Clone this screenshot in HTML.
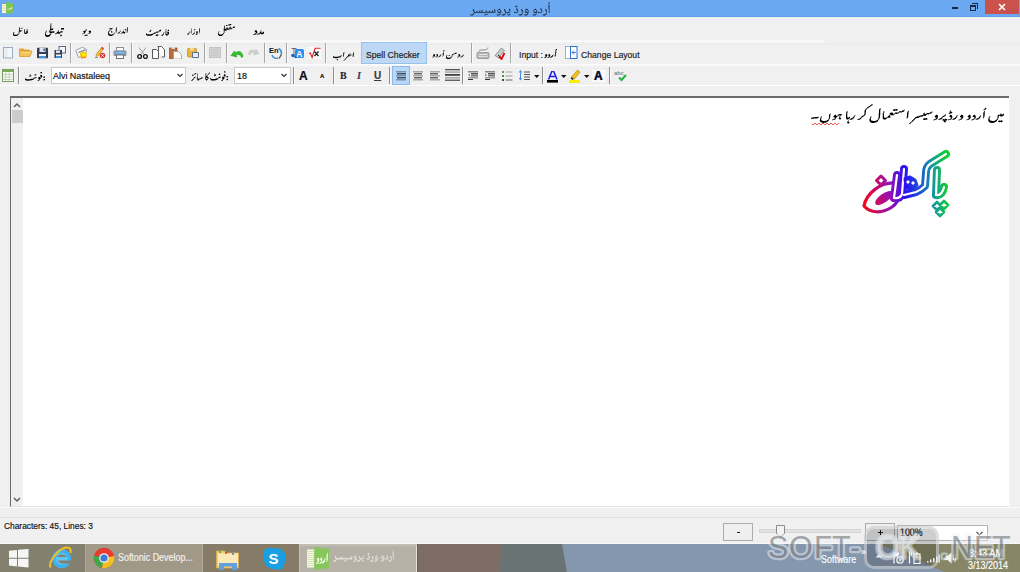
<!DOCTYPE html><html><head><meta charset="utf-8"><style>
*{margin:0;padding:0;box-sizing:border-box}
html,body{width:1020px;height:572px;overflow:hidden;background:#f0f0f0;font-family:"Liberation Sans",sans-serif}
.a{position:absolute}
.u{position:absolute;shape-rendering:crispEdges;overflow:visible}
.t{position:absolute;white-space:pre;font-family:"Liberation Sans",sans-serif;transform-origin:0 0;-webkit-text-stroke:0.18px currentColor}
.sep{position:absolute;width:1px;background:#a0a0a0}
</style></head><body><div class="a" style="left:0;top:0;width:1020px;height:17px;background:#6aa8f1"></div><div class="a" style="left:0;top:16px;width:1020px;height:1px;background:#63a0ea"></div><svg class="a" style="left:0;top:0" width="16" height="16"><rect x="2" y="4" width="4" height="9" fill="#f2f6e2"/><path d="M2.5 5.5h3M2.5 8h3M2.5 10.5h3" stroke="#d8c8a0" stroke-width="0.7"/><path d="M6 2L13 3.3V12.5L6 14z" fill="#80c452"/><path d="M7.5 9.5h1M9 9.5v-1.5M10.5 9.5v-1.5M11.5 9v-2" stroke="#e8f4dc" stroke-width="0.9"/></svg><svg class="u" style="left:470px;top:2px" width="80" height="14" ><path fill="#1e2a3a" fill-opacity="0.25" d="M78 0h1v1h-1zM78 2h1v1h-1zM45 3h2v1h-2zM45 5h2v1h-2zM29 6h1v1h-1zM39 6h1v1h-1zM47 6h1v1h-1zM56 6h1v1h-1zM65 6h1v1h-1zM71 6h1v1h-1zM2 7h1v1h-1zM12 7h1v1h-1zM30 7h1v1h-1zM35 7h1v1h-1zM40 7h1v1h-1zM52 7h1v1h-1zM66 7h1v1h-1zM76 7h1v1h-1zM78 7h1v1h-1zM4 8h1v1h-1zM7 8h1v1h-1zM9 8h3v1h-3zM19 8h1v1h-1zM25 8h1v1h-1zM28 8h1v1h-1zM40 8h1v1h-1zM64 8h1v1h-1zM72 8h1v1h-1zM78 8h1v1h-1zM10 9h1v1h-1zM18 9h1v1h-1zM20 9h2v1h-2zM23 9h1v1h-1zM28 9h2v1h-2zM31 9h1v1h-1zM34 9h1v1h-1zM38 9h1v1h-1zM40 9h1v1h-1zM44 9h1v1h-1zM48 9h1v1h-1zM51 9h1v1h-1zM54 9h1v1h-1zM56 9h2v1h-2zM64 9h2v1h-2zM67 9h2v1h-2zM72 9h1v1h-1zM78 9h1v1h-1zM3 10h1v1h-1zM25 10h1v1h-1zM27 10h1v1h-1zM31 10h1v1h-1zM63 10h1v1h-1zM67 10h1v1h-1zM78 10h1v1h-1zM4 11h1v1h-1zM17 11h1v1h-1zM29 11h1v1h-1zM34 11h1v1h-1zM37 11h1v1h-1zM39 11h1v1h-1zM51 11h1v1h-1zM58 11h1v1h-1zM65 11h1v1h-1zM75 11h1v1h-1zM26 12h1v1h-1zM30 12h2v1h-2zM35 12h1v1h-1zM40 12h1v1h-1zM48 12h1v1h-1zM52 12h1v1h-1zM62 12h1v1h-1zM66 12h1v1h-1zM72 12h1v1h-1zM76 12h1v1h-1zM0 13h1v1h-1zM14 13h2v1h-2zM29 13h1v1h-1zM34 13h1v1h-1zM39 13h1v1h-1zM51 13h1v1h-1zM54 13h1v1h-1zM65 13h1v1h-1zM75 13h1v1h-1z"/><path fill="#1e2a3a" fill-opacity="0.50" d="M79 0h1v1h-1zM78 1h2v1h-2zM78 3h1v1h-1zM45 4h1v1h-1zM47 4h1v1h-1zM78 4h2v1h-2zM78 5h2v1h-2zM46 6h1v1h-1zM70 6h1v1h-1zM78 6h2v1h-2zM55 7h1v1h-1zM70 7h1v1h-1zM79 7h1v1h-1zM12 8h1v1h-1zM16 8h1v1h-1zM22 8h1v1h-1zM27 8h1v1h-1zM35 8h1v1h-1zM51 8h1v1h-1zM55 8h1v1h-1zM57 8h2v1h-2zM63 8h1v1h-1zM75 8h1v1h-1zM79 8h1v1h-1zM3 9h2v1h-2zM6 9h2v1h-2zM12 9h1v1h-1zM15 9h1v1h-1zM24 9h2v1h-2zM27 9h1v1h-1zM39 9h1v1h-1zM58 9h1v1h-1zM63 9h1v1h-1zM71 9h1v1h-1zM79 9h1v1h-1zM16 10h1v1h-1zM39 10h1v1h-1zM47 10h1v1h-1zM52 10h1v1h-1zM55 10h1v1h-1zM58 10h1v1h-1zM71 10h1v1h-1zM76 10h1v1h-1zM79 10h1v1h-1zM30 11h1v1h-1zM35 11h1v1h-1zM52 11h1v1h-1zM57 11h1v1h-1zM66 11h1v1h-1zM0 12h2v1h-2zM3 12h1v1h-1zM14 12h2v1h-2zM17 12h1v1h-1zM27 12h2v1h-2zM32 12h1v1h-1zM37 12h2v1h-2zM49 12h1v1h-1zM54 12h2v1h-2zM63 12h2v1h-2zM73 12h1v1h-1zM1 13h2v1h-2zM27 13h2v1h-2zM32 13h2v1h-2zM38 13h1v1h-1zM49 13h2v1h-2zM55 13h2v1h-2zM63 13h2v1h-2zM73 13h2v1h-2z"/><path fill="#1e2a3a" fill-opacity="0.75" d="M79 3h1v1h-1zM46 4h1v1h-1zM3 7h1v1h-1zM24 7h1v1h-1zM28 7h1v1h-1zM34 7h1v1h-1zM46 7h2v1h-2zM51 7h1v1h-1zM57 7h1v1h-1zM64 7h1v1h-1zM71 7h1v1h-1zM75 7h1v1h-1zM24 8h1v1h-1zM30 8h1v1h-1zM34 8h1v1h-1zM39 8h1v1h-1zM47 8h1v1h-1zM52 8h1v1h-1zM66 8h1v1h-1zM71 8h1v1h-1zM76 8h1v1h-1zM9 9h1v1h-1zM11 9h1v1h-1zM16 9h1v1h-1zM19 9h1v1h-1zM22 9h1v1h-1zM30 9h1v1h-1zM35 9h1v1h-1zM47 9h1v1h-1zM52 9h1v1h-1zM55 9h1v1h-1zM66 9h1v1h-1zM76 9h1v1h-1zM5 10h11v1h-11zM17 10h8v1h-8zM29 10h2v1h-2zM35 10h4v1h-4zM44 10h3v1h-3zM57 10h1v1h-1zM65 10h2v1h-2zM68 10h3v1h-3zM3 11h1v1h-1zM76 11h1v1h-1zM2 12h1v1h-1zM16 12h1v1h-1zM29 12h1v1h-1zM33 12h2v1h-2zM39 12h1v1h-1zM50 12h2v1h-2zM56 12h2v1h-2zM65 12h1v1h-1zM74 12h2v1h-2z"/><path fill="#1e2a3a" fill-opacity="1.00" d="M29 7h1v1h-1zM39 7h1v1h-1zM56 7h1v1h-1zM65 7h1v1h-1zM3 8h1v1h-1zM4 10h1v1h-1zM28 10h1v1h-1zM56 10h1v1h-1zM64 10h1v1h-1z"/></svg><div class="a" style="left:952px;top:7px;width:6px;height:2px;background:#1b2a3b"></div><div class="a" style="left:970px;top:5px;width:6px;height:6px;border:1px solid #1b2a3b;border-top-width:2px"></div><div class="a" style="left:972px;top:3px;width:6px;height:6px;border-top:1px solid #1b2a3b;border-right:1px solid #1b2a3b"></div><div class="a" style="left:985px;top:0;width:34px;height:14px;background:#c9524c"></div><svg class="a" style="left:998px;top:3px" width="8" height="8"><path d="M1 1L7 7M7 1L1 7" stroke="#fff" stroke-width="1.6"/></svg><svg class="u" style="left:13px;top:27px" width="15" height="9" ><path fill="#000" fill-opacity="0.25" d="M9 0h1v1h-1zM7 1h1v1h-1zM9 1h1v1h-1zM13 2h1v1h-1zM9 3h1v1h-1zM13 3h1v1h-1zM5 4h1v1h-1zM8 4h1v1h-1zM1 5h1v1h-1zM5 5h1v1h-1zM6 6h1v1h-1zM14 6h1v1h-1zM2 7h2v1h-2z"/><path fill="#000" fill-opacity="0.50" d="M6 0h1v1h-1zM8 1h1v1h-1zM11 2h1v1h-1zM14 2h1v1h-1zM7 3h2v1h-2zM14 3h1v1h-1zM0 5h1v1h-1zM6 5h1v1h-1zM12 5h1v1h-1zM5 6h1v1h-1zM11 6h1v1h-1zM1 7h1v1h-1zM5 7h1v1h-1zM0 8h1v1h-1zM4 8h1v1h-1z"/><path fill="#000" fill-opacity="0.75" d="M6 1h1v1h-1zM6 2h1v1h-1zM11 3h1v1h-1zM6 4h2v1h-2zM11 4h1v1h-1zM13 4h2v1h-2zM11 5h1v1h-1zM13 5h2v1h-2zM0 6h1v1h-1zM13 6h1v1h-1zM4 7h1v1h-1z"/><path fill="#000" fill-opacity="1.00" d="M6 3h1v1h-1zM12 6h1v1h-1zM0 7h1v1h-1zM1 8h3v1h-3z"/></svg><svg class="u" style="left:45px;top:23px" width="19" height="14" ><path fill="#000" fill-opacity="0.25" d="M5 0h2v1h-2zM6 1h1v1h-1zM6 2h1v1h-1zM6 3h1v1h-1zM6 4h1v1h-1zM8 5h1v1h-1zM1 7h1v1h-1zM6 7h1v1h-1zM0 8h1v1h-1zM9 8h1v1h-1zM12 8h1v1h-1zM1 9h1v1h-1zM9 9h1v1h-1zM11 9h1v1h-1zM17 9h1v1h-1zM6 10h1v1h-1zM1 11h1v1h-1zM10 11h1v1h-1zM15 11h2v1h-2zM5 12h1v1h-1zM0 13h1v1h-1zM4 13h1v1h-1zM15 13h1v1h-1z"/><path fill="#000" fill-opacity="0.50" d="M5 1h1v1h-1zM5 2h1v1h-1zM6 5h2v1h-2zM17 6h2v1h-2zM4 7h2v1h-2zM13 7h1v1h-1zM1 8h1v1h-1zM6 8h1v1h-1zM15 8h1v1h-1zM17 8h1v1h-1zM0 9h1v1h-1zM4 9h1v1h-1zM16 9h1v1h-1zM5 10h1v1h-1zM10 10h1v1h-1zM12 10h1v1h-1zM4 11h1v1h-1z"/><path fill="#000" fill-opacity="0.75" d="M5 3h1v1h-1zM5 4h1v1h-1zM5 5h1v1h-1zM16 5h1v1h-1zM16 6h1v1h-1zM4 8h2v1h-2zM7 8h2v1h-2zM13 8h1v1h-1zM16 8h1v1h-1zM7 9h2v1h-2zM14 9h2v1h-2zM0 10h1v1h-1zM11 10h1v1h-1zM13 10h2v1h-2zM5 11h1v1h-1zM0 12h1v1h-1zM2 12h1v1h-1zM15 12h2v1h-2zM1 13h1v1h-1zM3 13h1v1h-1z"/><path fill="#000" fill-opacity="1.00" d="M17 5h2v1h-2zM5 6h3v1h-3zM5 9h2v1h-2zM12 9h2v1h-2zM0 11h1v1h-1zM1 12h1v1h-1zM3 12h2v1h-2zM2 13h1v1h-1z"/></svg><svg class="u" style="left:82px;top:29px" width="9" height="7" ><path fill="#000" fill-opacity="0.25" d="M3 0h1v1h-1zM2 1h1v1h-1zM7 1h2v1h-2zM6 2h1v1h-1zM1 3h1v1h-1zM3 3h1v1h-1zM0 4h1v1h-1zM8 4h1v1h-1zM0 5h1v1h-1zM3 5h3v1h-3z"/><path fill="#000" fill-opacity="0.50" d="M4 0h1v1h-1zM3 1h2v1h-2zM1 4h2v1h-2zM6 4h2v1h-2zM2 6h1v1h-1zM5 6h1v1h-1z"/><path fill="#000" fill-opacity="0.75" d="M1 2h1v1h-1zM3 2h1v1h-1zM7 3h2v1h-2zM3 6h2v1h-2z"/><path fill="#000" fill-opacity="1.00" d="M2 2h1v1h-1zM7 2h2v1h-2zM2 3h1v1h-1z"/></svg><svg class="u" style="left:108px;top:27px" width="20" height="9" ><path fill="#000" fill-opacity="0.25" d="M1 2h1v1h-1zM7 2h1v1h-1zM16 2h1v1h-1zM18 2h1v1h-1zM2 3h1v1h-1zM7 3h1v1h-1zM12 3h1v1h-1zM15 3h1v1h-1zM17 3h2v1h-2zM4 4h1v1h-1zM7 4h1v1h-1zM11 4h1v1h-1zM14 4h1v1h-1zM17 4h2v1h-2zM4 5h1v1h-1zM6 5h3v1h-3zM13 5h1v1h-1zM17 5h3v1h-3zM1 6h1v1h-1zM5 6h1v1h-1zM9 6h1v1h-1zM11 6h2v1h-2zM14 6h2v1h-2zM0 8h1v1h-1z"/><path fill="#000" fill-opacity="0.50" d="M8 0h1v1h-1zM19 0h1v1h-1zM1 1h1v1h-1zM4 1h1v1h-1zM2 2h2v1h-2zM1 3h1v1h-1zM0 4h2v1h-2zM8 4h1v1h-1zM12 4h1v1h-1zM19 4h1v1h-1zM3 5h1v1h-1zM10 5h1v1h-1zM6 6h1v1h-1zM10 6h1v1h-1zM13 6h1v1h-1zM16 6h1v1h-1zM2 7h2v1h-2zM4 8h1v1h-1z"/><path fill="#000" fill-opacity="0.75" d="M2 1h2v1h-2zM8 1h1v1h-1zM19 1h1v1h-1zM8 2h1v1h-1zM17 2h1v1h-1zM19 2h1v1h-1zM8 3h1v1h-1zM19 3h1v1h-1zM3 4h1v1h-1zM15 4h1v1h-1zM0 5h1v1h-1zM11 5h1v1h-1zM14 5h1v1h-1zM0 7h1v1h-1zM4 7h2v1h-2zM1 8h1v1h-1z"/><path fill="#000" fill-opacity="1.00" d="M15 5h2v1h-2zM0 6h1v1h-1zM1 7h1v1h-1zM2 8h2v1h-2z"/></svg><svg class="u" style="left:146px;top:29px" width="23" height="7" ><path fill="#000" fill-opacity="0.25" d="M4 0h1v1h-1zM14 0h1v1h-1zM19 0h2v1h-2zM22 0h1v1h-1zM5 1h1v1h-1zM19 1h3v1h-3zM10 2h1v1h-1zM14 2h1v1h-1zM20 2h3v1h-3zM12 3h1v1h-1zM17 3h2v1h-2zM20 3h1v1h-1zM6 4h1v1h-1zM7 5h1v1h-1zM12 5h1v1h-1zM0 6h1v1h-1zM9 6h1v1h-1zM12 6h1v1h-1z"/><path fill="#000" fill-opacity="0.50" d="M3 2h1v1h-1zM11 2h3v1h-3zM19 2h1v1h-1zM8 3h2v1h-2zM19 3h1v1h-1zM0 4h1v1h-1zM9 4h1v1h-1zM17 4h1v1h-1zM19 4h3v1h-3zM10 5h2v1h-2zM16 5h1v1h-1zM19 5h1v1h-1zM22 5h1v1h-1zM5 6h1v1h-1zM15 6h1v1h-1zM20 6h2v1h-2z"/><path fill="#000" fill-opacity="0.75" d="M4 1h1v1h-1zM13 1h1v1h-1zM4 2h1v1h-1zM10 3h2v1h-2zM21 3h1v1h-1zM7 4h2v1h-2zM1 5h4v1h-4zM17 5h1v1h-1zM21 5h1v1h-1zM1 6h4v1h-4zM11 6h1v1h-1zM16 6h1v1h-1z"/><path fill="#000" fill-opacity="1.00" d="M14 1h1v1h-1zM22 1h1v1h-1zM22 3h1v1h-1zM22 4h1v1h-1zM0 5h1v1h-1zM5 5h2v1h-2zM20 5h1v1h-1zM10 6h1v1h-1z"/></svg><svg class="u" style="left:187px;top:28px" width="13" height="7" ><path fill="#000" fill-opacity="0.25" d="M4 0h1v1h-1zM8 1h1v1h-1zM7 2h1v1h-1zM2 3h2v1h-2zM7 3h1v1h-1zM3 4h1v1h-1zM0 5h1v1h-1zM2 5h1v1h-1zM4 5h1v1h-1zM12 5h1v1h-1zM8 6h1v1h-1zM10 6h1v1h-1z"/><path fill="#000" fill-opacity="0.50" d="M12 0h1v1h-1zM4 1h1v1h-1zM4 2h1v1h-1zM4 3h1v1h-1zM9 3h2v1h-2zM2 4h1v1h-1zM4 4h1v1h-1zM7 4h1v1h-1zM12 4h1v1h-1zM7 5h1v1h-1zM9 5h2v1h-2zM0 6h2v1h-2zM5 6h2v1h-2z"/><path fill="#000" fill-opacity="0.75" d="M7 1h1v1h-1zM12 1h1v1h-1zM12 2h1v1h-1zM12 3h1v1h-1zM9 4h2v1h-2zM1 5h1v1h-1zM6 5h1v1h-1zM9 6h1v1h-1z"/></svg><svg class="u" style="left:218px;top:24px" width="17" height="12" ><path fill="#000" fill-opacity="0.25" d="M13 0h1v1h-1zM6 1h1v1h-1zM10 1h1v1h-1zM12 1h1v1h-1zM12 2h1v1h-1zM15 2h1v1h-1zM8 3h1v1h-1zM13 3h2v1h-2zM5 4h1v1h-1zM7 4h1v1h-1zM14 4h1v1h-1zM5 5h1v1h-1zM12 5h2v1h-2zM5 6h1v1h-1zM0 7h2v1h-2zM5 7h1v1h-1zM5 8h1v1h-1zM5 10h1v1h-1zM0 11h1v1h-1zM4 11h1v1h-1z"/><path fill="#000" fill-opacity="0.50" d="M10 0h1v1h-1zM9 1h1v1h-1zM11 1h1v1h-1zM16 2h1v1h-1zM9 3h1v1h-1zM11 3h1v1h-1zM10 4h1v1h-1zM11 5h1v1h-1zM8 6h1v1h-1zM6 7h1v1h-1zM0 8h1v1h-1zM6 8h1v1h-1zM2 10h2v1h-2z"/><path fill="#000" fill-opacity="0.75" d="M11 0h1v1h-1zM6 2h1v1h-1zM6 3h1v1h-1zM12 3h1v1h-1zM16 3h1v1h-1zM6 4h1v1h-1zM8 4h2v1h-2zM11 4h3v1h-3zM8 5h3v1h-3zM6 6h2v1h-2zM0 9h1v1h-1zM5 9h1v1h-1zM1 10h1v1h-1z"/><path fill="#000" fill-opacity="1.00" d="M12 0h1v1h-1zM8 1h1v1h-1zM15 3h1v1h-1zM6 5h2v1h-2zM0 10h1v1h-1zM4 10h1v1h-1zM1 11h3v1h-3z"/></svg><svg class="u" style="left:253px;top:30px" width="11" height="5" ><path fill="#000" fill-opacity="0.25" d="M7 0h2v1h-2zM1 1h1v1h-1zM4 1h1v1h-1zM8 1h1v1h-1zM10 1h1v1h-1zM2 2h1v1h-1zM4 2h1v1h-1zM6 2h1v1h-1zM1 3h1v1h-1zM4 3h1v1h-1zM3 4h1v1h-1zM6 4h1v1h-1zM8 4h2v1h-2z"/><path fill="#000" fill-opacity="0.50" d="M3 0h1v1h-1zM7 1h1v1h-1zM8 2h2v1h-2zM3 3h1v1h-1zM5 3h1v1h-1zM0 4h1v1h-1zM2 4h1v1h-1zM4 4h2v1h-2z"/><path fill="#000" fill-opacity="0.75" d="M2 0h1v1h-1zM2 3h1v1h-1zM6 3h2v1h-2zM10 3h1v1h-1zM1 4h1v1h-1z"/><path fill="#000" fill-opacity="1.00" d="M2 1h2v1h-2zM3 2h1v1h-1zM7 2h1v1h-1zM10 2h1v1h-1zM8 3h2v1h-2z"/></svg><div class="a" style="left:0;top:40px;width:825px;height:1px;background:#f4f7fa"></div><div class="a" style="left:0;top:41px;width:825px;height:1px;background:#fcfcfc"></div><div class="a" style="left:0;top:44px;width:1020px;height:1px;background:#ebebeb"></div><div class="a" style="left:0;top:64px;width:1020px;height:1px;background:#fafbfc"></div><div class="a" style="left:0;top:65px;width:1020px;height:1px;background:#f5f7f9"></div><div class="a" style="left:0;top:68px;width:1020px;height:1px;background:#ebebeb"></div><div class="a" style="left:0;top:85px;width:1020px;height:1px;background:#fff"></div><svg class="a" style="left:3px;top:47px" width="11" height="12" viewBox="0 0 11 12"><rect x="0.5" y="0.5" width="9" height="10.5" fill="#f3f6fb" stroke="#9eabc0"/><rect x="1.5" y="1.5" width="3" height="8.5" fill="#e3e9f2"/></svg><svg class="a" style="left:19px;top:47px" width="14" height="11" viewBox="0 0 14 11"><path d="M0.5 1.5h4l1 1h5v2h-9z" fill="#e3a834"/><path d="M0.5 2v7.5h10.5l2-5.5h-10z" fill="#f2c35a" stroke="#d59a26" stroke-width="0.8"/><path d="M3 5.5h8.5" stroke="#fbe3a0" stroke-width="0.8"/></svg><svg class="a" style="left:37px;top:47px" width="12" height="12" viewBox="0 0 12 12"><rect x="0" y="0.8" width="11" height="10.4" rx="0.8" fill="#2f3e56"/><rect x="2.5" y="1" width="6" height="4" fill="#dfe4ec"/><rect x="6.5" y="1.5" width="1.2" height="2.5" fill="#2f3e56"/><rect x="2" y="7" width="7" height="2" fill="#f4f6f9"/><rect x="2" y="9" width="7" height="2" fill="#4a90d8"/></svg><svg class="a" style="left:54px;top:46px" width="12" height="13" viewBox="0 0 12 13"><rect x="5" y="0.5" width="6.5" height="6.5" fill="#f4f6fa" stroke="#5b6a82" stroke-width="1"/><rect x="0.5" y="4" width="7.5" height="8" fill="#34445e"/><rect x="2" y="4.5" width="4" height="2.5" fill="#dfe4ec"/><rect x="2" y="8.5" width="5" height="1.5" fill="#f2f4f8"/><rect x="2" y="10" width="5" height="2" fill="#4a90d8"/></svg><div class="a" style="left:70px;top:43px;width:1px;height:20px;background:#a4a4a4"></div><div class="a" style="left:71px;top:43px;width:1px;height:20px;background:#fafafa"></div><svg class="a" style="left:75px;top:46px" width="13" height="13" viewBox="0 0 13 13"><path d="M0.6 4.4L7.6 1.2L11.8 3.7L10 9L3.7 11.6z" fill="#fafafa" stroke="#9aa0aa" stroke-width="1"/><path d="M3.5 6.5L10.5 3.8" stroke="#8a9ab8" stroke-width="1.6"/><circle cx="8.5" cy="9" r="3.4" fill="#f4c800"/><circle cx="8.8" cy="8.5" r="1.6" fill="#fff200"/><path d="M6.5 12.3l1.2-0.8M9.5 12l0.8-1" stroke="#d83020" stroke-width="1"/></svg><svg class="a" style="left:94px;top:46px" width="12" height="13" viewBox="0 0 12 13"><path d="M7.5 1.5l2 1.5-5 6.5-2.5 1 .5-2.5z" fill="#f0c040" stroke="#c88a20" stroke-width="0.7"/><path d="M7.5 1.5l2 1.5" stroke="#d84040" stroke-width="1.6"/><circle cx="8.5" cy="9.5" r="2.8" fill="#d83a3a"/><path d="M7.3 8.3l2.4 2.4M9.7 8.3l-2.4 2.4" stroke="#fff" stroke-width="0.9"/><path d="M1 11.5h3" stroke="#8b8b8b" stroke-width="1"/></svg><div class="a" style="left:109px;top:43px;width:1px;height:20px;background:#a4a4a4"></div><div class="a" style="left:110px;top:43px;width:1px;height:20px;background:#fafafa"></div><svg class="a" style="left:113px;top:47px" width="14" height="12" viewBox="0 0 14 12"><rect x="3.5" y="0.5" width="7" height="3.5" fill="#fff" stroke="#7e8590" stroke-width="0.9"/><rect x="0.5" y="3.5" width="13" height="5.5" rx="1" fill="#8d939d"/><rect x="2.5" y="4.5" width="9" height="3" fill="#76b2e6"/><rect x="3.5" y="8" width="7" height="3.5" fill="#fff" stroke="#5d636d" stroke-width="0.9"/></svg><div class="a" style="left:131px;top:43px;width:1px;height:20px;background:#a4a4a4"></div><div class="a" style="left:132px;top:43px;width:1px;height:20px;background:#fafafa"></div><svg class="a" style="left:137px;top:47px" width="11" height="12" viewBox="0 0 11 12"><path d="M2 0.5l5.5 7.5M9 0.5l-5.5 7.5" stroke="#9aa0a8" stroke-width="1"/><circle cx="2.6" cy="9.5" r="1.9" fill="none" stroke="#1d1d1d" stroke-width="1.4"/><circle cx="8.4" cy="9.5" r="1.9" fill="none" stroke="#1d1d1d" stroke-width="1.4"/></svg><svg class="a" style="left:152px;top:46px" width="14" height="13" viewBox="0 0 14 13"><path d="M0.5 3.5h4l2 2v7h-6z" fill="#fff" stroke="#5a5a5a" stroke-width="1"/><path d="M5.5 0.5h4l3 3v7.5h-3" fill="#fff" stroke="#5a5a5a" stroke-width="1"/><path d="M6.5 1v4.5" stroke="#5a5a5a" stroke-width="1"/></svg><svg class="a" style="left:169px;top:47px" width="14" height="12" viewBox="0 0 14 12"><rect x="0.5" y="1" width="7.5" height="10.5" fill="#b86c3a" stroke="#8a4c26" stroke-width="0.7"/><rect x="2.5" y="0" width="3.5" height="2" fill="#d8d8d8"/><path d="M4.5 4.5h5l3 3v4.5h-8z" fill="#fbfbfb" stroke="#9a9a9a" stroke-width="0.8"/></svg><svg class="a" style="left:187px;top:47px" width="13" height="11" viewBox="0 0 13 11"><rect x="0.5" y="1.5" width="9" height="8.5" rx="1" fill="#eab43c" stroke="#c08a20" stroke-width="0.7"/><rect x="3" y="0.5" width="4" height="3" fill="#f6dc90"/><path d="M5.5 5.5h6v5h-6z" fill="#e8eef8" stroke="#5b6f8e" stroke-width="1"/></svg><div class="a" style="left:204px;top:43px;width:1px;height:20px;background:#a4a4a4"></div><div class="a" style="left:205px;top:43px;width:1px;height:20px;background:#fafafa"></div><svg class="a" style="left:209px;top:47px" width="12" height="11" viewBox="0 0 12 11"><rect x="0.5" y="0.5" width="11" height="10" fill="#d4d4d4" stroke="#c4c4c4"/><path d="M2 3h8M2 5.5h8M2 8h8" stroke="#c0c0c0" stroke-width="0.8"/></svg><div class="a" style="left:226px;top:43px;width:1px;height:20px;background:#a4a4a4"></div><div class="a" style="left:227px;top:43px;width:1px;height:20px;background:#fafafa"></div><svg class="a" style="left:230px;top:48px" width="14" height="10" viewBox="0 0 14 10"><path d="M1 7.5l3.5-4.5 1 2c3-2.5 6.5-2 7.5 3.5l-1.5 1c-1-3-3.5-3.5-5.5-2.5l1 2z" fill="#2ec02e" stroke="#1a9a1a" stroke-width="0.6"/></svg><svg class="a" style="left:248px;top:47px" width="12" height="10" viewBox="0 0 12 10"><path d="M11 6.5l-3-4.5-1 2c-3-2-6-1-6.5 3.5l1.5.5c.5-2.5 2.5-3 4.5-2l-1 2z" fill="#cdcdcd" stroke="#c0c0c0" stroke-width="0.5"/></svg><div class="a" style="left:264px;top:43px;width:1px;height:20px;background:#a4a4a4"></div><div class="a" style="left:265px;top:43px;width:1px;height:20px;background:#fafafa"></div><svg class="a" style="left:269px;top:46px" width="14" height="13" viewBox="0 0 14 13"><text x="0" y="6.5" font-family="Liberation Sans" font-weight="bold" font-size="7.5" fill="#111">En</text><path d="M9.5 2.5a5 5 0 0 1 2.5 6" stroke="#4a90d8" stroke-width="1.6" fill="none"/><path d="M3 9a4.5 4.5 0 0 0 6 3" stroke="#4a90d8" stroke-width="1.6" fill="none"/><path d="M10 12.5l2.5-4" stroke="#5a5040" stroke-width="1.4"/></svg><div class="a" style="left:286px;top:43px;width:1px;height:20px;background:#a4a4a4"></div><div class="a" style="left:287px;top:43px;width:1px;height:20px;background:#fafafa"></div><svg class="a" style="left:291px;top:47px" width="13" height="11" viewBox="0 0 13 11"><rect x="4" y="2" width="9" height="9" rx="1.5" fill="#2e8ff0"/><text x="5.3" y="9.7" font-family="Liberation Sans" font-weight="bold" font-size="8.5" fill="#fff">A</text><path d="M0.5 1.5h5M3 1.5v6" stroke="#5a6a7a" stroke-width="1"/><circle cx="2" cy="8.5" r="1.8" fill="#1e5fb8"/><circle cx="4.5" cy="10" r="1.2" fill="#1e5fb8"/></svg><svg class="a" style="left:308px;top:47px" width="13" height="12" viewBox="0 0 13 12"><rect x="0" y="0" width="13" height="12" fill="#fafafa"/><path d="M0.8 6.5l1.5-.5 1.8 4.5 3-9.2h5.5" stroke="#e02020" stroke-width="1.1" fill="none"/><path d="M6.5 4.5l4 4.5M10.5 4.5l-4 4.5" stroke="#222" stroke-width="1.3"/></svg><div class="a" style="left:325px;top:43px;width:1px;height:20px;background:#a4a4a4"></div><div class="a" style="left:326px;top:43px;width:1px;height:20px;background:#fafafa"></div><div class="a" style="left:361px;top:42px;width:66px;height:22px;background:#bcd8f5;border:1px solid #99c2ea"></div><div class="t" style="left:366px;top:49px;font-size:9.6px;color:#1b1b1b;transform:scaleX(.9)">Spell Checker</div><div class="a" style="left:471px;top:43px;width:1px;height:20px;background:#a4a4a4"></div><div class="a" style="left:472px;top:43px;width:1px;height:20px;background:#fafafa"></div><svg class="a" style="left:476px;top:47px" width="14" height="12" viewBox="0 0 14 12"><path d="M3 4.5c0-1.5 1-1.5 4-1.5s5-0.5 5-2.5" stroke="#8a8a8a" stroke-width="1" fill="none"/><rect x="1" y="5.5" width="12" height="6" rx="1" fill="#b8b8b8" stroke="#8e8e8e" stroke-width="0.8"/><path d="M2.5 7.5h9M2.5 9.5h9" stroke="#e4e4e4" stroke-width="0.9"/></svg><svg class="a" style="left:494px;top:47px" width="12" height="13" viewBox="0 0 12 13"><path d="M1 8.5l6.5-7.5 3 2.5-6 7.5z" fill="#c8ccc8" stroke="#7c807c" stroke-width="0.8"/><path d="M4 8l3 2.5" stroke="#222" stroke-width="1"/><path d="M5 9.5l2.5 2.5 3-6" stroke="#e00000" stroke-width="1.8" fill="none"/></svg><div class="a" style="left:510px;top:43px;width:1px;height:20px;background:#a4a4a4"></div><div class="a" style="left:511px;top:43px;width:1px;height:20px;background:#fafafa"></div><div class="t" style="left:519px;top:49px;font-size:9.6px;color:#1b1b1b;transform:scaleX(.9)">Input :</div><svg class="a" style="left:565px;top:46px" width="13" height="13" viewBox="0 0 13 13"><rect x="0.5" y="0.5" width="5" height="12" fill="#fff" stroke="#8aa0b8" stroke-width="0.8"/><rect x="5.5" y="0.5" width="6.5" height="12" fill="#fff" stroke="#2f6fd0" stroke-width="1"/><path d="M7 6.5h4M7 6.5l2-2M7 6.5l2 2" stroke="#2f6fd0" stroke-width="0.9" fill="none"/></svg><div class="t" style="left:581px;top:49px;font-size:9.6px;color:#1b1b1b;transform:scaleX(.9)">Change Layout</div><svg class="a" style="left:1px;top:69px" width="14" height="13" viewBox="0 0 14 13"><rect x="1.5" y="0.5" width="11" height="12" fill="#fafcf8" stroke="#79a060" stroke-width="1"/><rect x="1.5" y="0.5" width="11" height="2.5" fill="#7aa85a"/><path d="M2 5.5h10M2 8h10M2 10.5h10M4.8 3v9M8.2 3v9" stroke="#b8ccb0" stroke-width="0.8"/></svg><div class="a" style="left:18px;top:67px;width:1px;height:17px;background:#8c8c8c"></div><div class="a" style="left:19px;top:67px;width:1px;height:17px;background:#fafafa"></div><div class="a" style="left:51px;top:67px;width:135px;height:17px;background:#fff;border:1px solid #c9c9c9"></div><div class="t" style="left:53px;top:70px;font-size:9.6px;color:#111;transform:scaleX(.93)">Alvi Nastaleeq</div><svg class="a" style="left:177px;top:73px" width="6" height="5" viewBox="0 0 6 5"><path d="M0.5 1l2.5 2.5 2.5-2.5" stroke="#333" stroke-width="1.2" fill="none"/></svg><div class="a" style="left:234px;top:67px;width:57px;height:17px;background:#fff;border:1px solid #c9c9c9"></div><div class="t" style="left:237px;top:70px;font-size:9.6px;color:#111;transform:scaleX(.93)">18</div><svg class="a" style="left:281px;top:73px" width="6" height="5" viewBox="0 0 6 5"><path d="M0.5 1l2.5 2.5 2.5-2.5" stroke="#333" stroke-width="1.2" fill="none"/></svg><div class="a" style="left:293px;top:67px;width:1px;height:17px;background:#8c8c8c"></div><div class="a" style="left:294px;top:67px;width:1px;height:17px;background:#fafafa"></div><div class="t" style="left:299px;top:69px;font-size:12px;font-weight:bold;color:#0c0c0c">A</div><div class="t" style="left:320px;top:73px;font-size:6px;font-weight:bold;color:#111">A</div><div class="a" style="left:333px;top:67px;width:1px;height:17px;background:#8c8c8c"></div><div class="a" style="left:334px;top:67px;width:1px;height:17px;background:#fafafa"></div><div class="t" style="left:340px;top:70px;font-size:10px;font-weight:bold;color:#2a2a2a;font-family:'Liberation Serif'">B</div><div class="t" style="left:357px;top:70px;font-size:10px;font-weight:bold;font-style:italic;color:#2c3e5c;font-family:'Liberation Serif'">I</div><div class="t" style="left:374px;top:70px;font-size:10px;font-weight:bold;color:#3a3a3a;text-decoration:underline;font-family:'Liberation Sans'">U</div><div class="a" style="left:389px;top:67px;width:1px;height:17px;background:#8c8c8c"></div><div class="a" style="left:390px;top:67px;width:1px;height:17px;background:#fafafa"></div><div class="a" style="left:392px;top:66px;width:18px;height:19px;background:#b9d7f6;border:1px solid #8cb9ea"></div><svg class="a" style="left:396px;top:71px" width="10" height="10" viewBox="0 0 10 10"><rect x="0" y="0" width="10" height="1.5" fill="#7890a8"/><rect x="1" y="2" width="9" height="1.5" fill="#40506a"/><rect x="0" y="4" width="10" height="1.5" fill="#7890a8"/><rect x="1" y="6" width="9" height="1.5" fill="#40506a"/><rect x="0" y="8" width="10" height="1.5" fill="#7890a8"/></svg><svg class="a" style="left:413px;top:71px" width="10" height="10" viewBox="0 0 10 10"><rect x="0" y="0" width="10" height="1.5" fill="#a8a8a8"/><rect x="1" y="2" width="8" height="1.5" fill="#666"/><rect x="0" y="4" width="10" height="1.5" fill="#a8a8a8"/><rect x="1" y="6" width="8" height="1.5" fill="#666"/><rect x="0" y="8" width="10" height="1.5" fill="#a8a8a8"/></svg><svg class="a" style="left:430px;top:71px" width="10" height="10" viewBox="0 0 10 10"><rect x="0" y="0" width="10" height="1.5" fill="#a8a8a8"/><rect x="0" y="2" width="8" height="1.5" fill="#666"/><rect x="0" y="4" width="10" height="1.5" fill="#a8a8a8"/><rect x="0" y="6" width="8" height="1.5" fill="#666"/><rect x="0" y="8" width="10" height="1.5" fill="#a8a8a8"/></svg><svg class="a" style="left:445px;top:69px" width="15" height="12" viewBox="0 0 15 12"><rect x="0" y="0" width="15" height="1.3" fill="#555"/><rect x="0" y="2.3" width="15" height="1.6" fill="#aaa"/><rect x="0" y="5" width="15" height="1.8" fill="#444"/><rect x="0" y="8" width="15" height="1.6" fill="#aaa"/><rect x="0" y="10.6" width="15" height="1.3" fill="#555"/></svg><div class="a" style="left:462px;top:67px;width:1px;height:17px;background:#8c8c8c"></div><div class="a" style="left:463px;top:67px;width:1px;height:17px;background:#fafafa"></div><svg class="a" style="left:468px;top:71px" width="11" height="9" viewBox="0 0 11 9"><rect x="0" y="0" width="10" height="1.5" fill="#888"/><rect x="3" y="2" width="7" height="1.5" fill="#555"/><rect x="3" y="4" width="7" height="1.5" fill="#777"/><rect x="0" y="6" width="10" height="1.5" fill="#999"/><rect x="0" y="8" width="5" height="1" fill="#333"/><path d="M2 2.5l-2 1.5 2 1.5z" fill="#4a9ae0"/></svg><svg class="a" style="left:485px;top:71px" width="11" height="9" viewBox="0 0 11 9"><rect x="0" y="0" width="10" height="1.5" fill="#888"/><rect x="3" y="2" width="7" height="1.5" fill="#555"/><rect x="3" y="4" width="7" height="1.5" fill="#777"/><rect x="0" y="6" width="10" height="1.5" fill="#999"/><rect x="0" y="8" width="5" height="1" fill="#333"/><path d="M0 2.5l2 1.5-2 1.5z" fill="#4a9ae0"/></svg><svg class="a" style="left:502px;top:71px" width="11" height="10" viewBox="0 0 11 10"><rect x="0" y="0" width="2" height="2" fill="#6a9a3a"/><rect x="0" y="4" width="2" height="2" fill="#5a8a2a"/><rect x="0" y="8" width="2" height="2" fill="#3a5a1a"/><rect x="3.5" y="0.5" width="7" height="1" fill="#aaa"/><rect x="3.5" y="4.5" width="7" height="1" fill="#999"/><rect x="3.5" y="8.5" width="7" height="1" fill="#666"/></svg><svg class="a" style="left:519px;top:70px" width="11" height="11" viewBox="0 0 11 11"><path d="M1.5 0l1.8 2.5h-3.6zM1.5 10.5l1.8-2.5h-3.6z" fill="#4a8ad8"/><rect x="1" y="2.5" width="1" height="5.5" fill="#4a8ad8"/><rect x="5" y="1.5" width="6" height="1" fill="#555"/><rect x="5" y="4" width="6" height="1" fill="#555"/><rect x="5" y="6.5" width="6" height="1" fill="#555"/><rect x="5" y="9" width="6" height="1" fill="#555"/></svg><svg class="a" style="left:534px;top:75px" width="6" height="3" viewBox="0 0 6 3"><path d="M0 0h5.5l-2.75 3z" fill="#111"/></svg><div class="a" style="left:542px;top:67px;width:1px;height:17px;background:#8c8c8c"></div><div class="a" style="left:543px;top:67px;width:1px;height:17px;background:#fafafa"></div><svg class="a" style="left:547px;top:71px" width="12" height="12" viewBox="0 0 12 12"><path d="M1.5 8.5l3.5-8.5h1.5l3.5 8.5M3.3 5.5h4.5" stroke="#1a1aee" stroke-width="1.5" fill="none"/><rect x="0" y="9" width="11" height="2.6" fill="#000"/></svg><svg class="a" style="left:561px;top:75px" width="6" height="3" viewBox="0 0 6 3"><path d="M0 0h5.5l-2.75 3z" fill="#111"/></svg><svg class="a" style="left:569px;top:69px" width="12" height="14" viewBox="0 0 12 14"><path d="M2.5 8l6-7 2.5 2-5.5 7z" fill="#f4c020" stroke="#b88a10" stroke-width="0.7"/><path d="M1.5 9.5l1-1.5 2.5 2-1.5 1z" fill="#333"/><rect x="0" y="11" width="11" height="3" fill="#f8f000"/></svg><svg class="a" style="left:584px;top:75px" width="6" height="3" viewBox="0 0 6 3"><path d="M0 0h5.5l-2.75 3z" fill="#111"/></svg><div class="a" style="left:592px;top:70px;width:13px;height:12px;background:#fbfbfb"></div><div class="t" style="left:594px;top:69px;font-size:12px;font-weight:bold;color:#0b0b20;text-shadow:0 0 1px #4a4af0">A</div><div class="a" style="left:609px;top:67px;width:1px;height:17px;background:#8c8c8c"></div><div class="a" style="left:610px;top:67px;width:1px;height:17px;background:#fafafa"></div><svg class="a" style="left:614px;top:69px" width="13" height="13" viewBox="0 0 13 13"><text x="0" y="6" font-family="Liberation Sans" font-size="6" fill="#666">abc</text><path d="M5 8.5l2.5 2.5 4.5-5" stroke="#28b040" stroke-width="2" fill="none"/></svg><svg class="u" style="left:333px;top:52px" width="21" height="9" ><path fill="#000" fill-opacity="0.25" d="M10 0h2v1h-2zM11 1h1v1h-1zM16 1h2v1h-2zM18 2h2v1h-2zM7 3h1v1h-1zM18 3h2v1h-2zM1 4h4v1h-4zM8 4h1v1h-1zM16 4h1v1h-1zM19 4h1v1h-1zM7 5h1v1h-1zM14 5h1v1h-1zM2 6h2v1h-2zM13 6h1v1h-1zM3 7h1v1h-1zM4 8h1v1h-1zM10 8h2v1h-2z"/><path fill="#000" fill-opacity="0.50" d="M20 0h1v1h-1zM15 2h3v1h-3zM8 3h1v1h-1zM17 3h1v1h-1zM5 4h1v1h-1zM10 4h1v1h-1zM15 4h1v1h-1zM20 4h1v1h-1zM6 5h1v1h-1zM12 6h1v1h-1zM11 7h2v1h-2z"/><path fill="#000" fill-opacity="0.75" d="M10 1h1v1h-1zM20 1h1v1h-1zM10 2h1v1h-1zM20 2h1v1h-1zM10 3h1v1h-1zM16 3h1v1h-1zM20 3h1v1h-1zM0 4h1v1h-1zM6 4h2v1h-2zM14 4h1v1h-1zM0 5h1v1h-1zM5 5h1v1h-1zM13 5h1v1h-1zM4 7h1v1h-1z"/><path fill="#000" fill-opacity="1.00" d="M15 3h1v1h-1zM1 5h4v1h-4z"/></svg><svg class="u" style="left:432px;top:50px" width="32" height="9" ><path fill="#000" fill-opacity="0.25" d="M23 2h2v1h-2zM10 3h1v1h-1zM21 3h1v1h-1zM8 4h3v1h-3zM22 4h1v1h-1zM31 4h1v1h-1zM4 5h1v1h-1zM7 5h1v1h-1zM10 5h1v1h-1zM15 5h2v1h-2zM19 5h1v1h-1zM28 5h1v1h-1zM0 6h1v1h-1zM3 6h1v1h-1zM6 6h1v1h-1zM8 6h1v1h-1zM10 6h1v1h-1zM20 6h1v1h-1zM25 6h1v1h-1zM28 6h1v1h-1zM0 7h2v1h-2zM3 7h2v1h-2zM6 7h1v1h-1zM16 7h2v1h-2zM25 7h2v1h-2zM28 7h2v1h-2z"/><path fill="#000" fill-opacity="0.50" d="M11 0h2v1h-2zM11 1h1v1h-1zM11 2h1v1h-1zM22 3h1v1h-1zM24 3h1v1h-1zM1 4h1v1h-1zM4 4h1v1h-1zM21 4h1v1h-1zM26 4h1v1h-1zM11 5h1v1h-1zM14 5h1v1h-1zM20 5h1v1h-1zM26 5h1v1h-1zM30 5h2v1h-2zM1 6h2v1h-2zM4 6h2v1h-2zM19 6h1v1h-1zM26 6h2v1h-2zM29 6h1v1h-1zM15 7h1v1h-1zM19 7h1v1h-1zM14 8h1v1h-1zM18 8h1v1h-1z"/><path fill="#000" fill-opacity="0.75" d="M11 3h1v1h-1zM2 4h1v1h-1zM5 4h1v1h-1zM11 4h1v1h-1zM20 4h1v1h-1zM27 4h1v1h-1zM1 5h1v1h-1zM8 5h1v1h-1zM17 5h1v1h-1zM7 6h1v1h-1zM14 6h1v1h-1zM30 6h1v1h-1zM18 7h1v1h-1z"/><path fill="#000" fill-opacity="1.00" d="M23 3h1v1h-1zM2 5h1v1h-1zM5 5h1v1h-1zM27 5h1v1h-1zM14 7h1v1h-1zM15 8h3v1h-3z"/></svg><svg class="u" style="left:544px;top:49px" width="13" height="9" ><path fill="#000" fill-opacity="0.25" d="M11 0h1v1h-1zM12 1h1v1h-1zM12 2h1v1h-1zM12 3h1v1h-1zM9 5h1v1h-1zM3 6h1v1h-1zM6 6h1v1h-1zM9 6h2v1h-2zM4 7h1v1h-1zM6 7h1v1h-1zM10 7h2v1h-2zM2 8h2v1h-2zM5 8h1v1h-1z"/><path fill="#000" fill-opacity="0.50" d="M11 1h1v1h-1zM11 2h1v1h-1zM1 5h1v1h-1zM4 5h1v1h-1zM4 6h1v1h-1zM1 7h1v1h-1zM0 8h1v1h-1zM6 8h2v1h-2z"/><path fill="#000" fill-opacity="0.75" d="M11 3h1v1h-1zM11 4h1v1h-1zM2 5h1v1h-1zM5 5h1v1h-1zM11 5h1v1h-1zM1 6h1v1h-1zM8 6h1v1h-1zM11 6h1v1h-1zM2 7h1v1h-1zM5 7h1v1h-1zM7 7h2v1h-2zM1 8h1v1h-1zM4 8h1v1h-1z"/><path fill="#000" fill-opacity="1.00" d="M12 0h1v1h-1zM2 6h1v1h-1zM5 6h1v1h-1z"/></svg><svg class="u" style="left:25px;top:72px" width="20" height="9" ><path fill="#000" fill-opacity="0.25" d="M15 1h2v1h-2zM4 2h2v1h-2zM9 2h1v1h-1zM11 2h1v1h-1zM4 3h1v1h-1zM6 3h1v1h-1zM9 3h1v1h-1zM17 4h2v1h-2zM6 6h2v1h-2zM10 6h1v1h-1zM13 7h1v1h-1zM0 8h1v1h-1zM6 8h1v1h-1zM12 8h1v1h-1zM14 8h1v1h-1zM18 8h2v1h-2z"/><path fill="#000" fill-opacity="0.50" d="M15 0h1v1h-1zM10 3h1v1h-1zM4 4h2v1h-2zM15 4h1v1h-1zM19 4h1v1h-1zM9 5h1v1h-1zM11 5h1v1h-1zM13 5h1v1h-1zM15 5h2v1h-2zM18 5h1v1h-1zM0 6h1v1h-1zM9 6h1v1h-1zM8 7h1v1h-1zM18 7h1v1h-1zM1 8h1v1h-1zM4 8h2v1h-2z"/><path fill="#000" fill-opacity="0.75" d="M10 2h1v1h-1zM5 3h1v1h-1zM15 3h1v1h-1zM10 5h1v1h-1zM19 5h1v1h-1zM8 6h1v1h-1zM13 6h1v1h-1zM15 6h1v1h-1zM2 7h3v1h-3zM14 7h1v1h-1zM2 8h2v1h-2zM13 8h1v1h-1z"/><path fill="#000" fill-opacity="1.00" d="M16 0h1v1h-1zM16 3h1v1h-1zM16 4h1v1h-1zM14 5h1v1h-1zM14 6h1v1h-1zM0 7h2v1h-2zM5 7h3v1h-3zM19 7h1v1h-1z"/></svg><svg class="u" style="left:191px;top:71px" width="37" height="10" ><path fill="#000" fill-opacity="0.25" d="M34 0h1v1h-1zM34 1h1v1h-1zM3 2h1v1h-1zM5 2h2v1h-2zM14 2h2v1h-2zM23 2h1v1h-1zM1 3h2v1h-2zM4 3h1v1h-1zM15 3h2v1h-2zM27 3h1v1h-1zM29 3h1v1h-1zM34 3h1v1h-1zM15 4h1v1h-1zM32 4h1v1h-1zM4 5h1v1h-1zM23 5h1v1h-1zM28 5h2v1h-2zM31 5h2v1h-2zM34 5h1v1h-1zM2 6h1v1h-1zM4 6h1v1h-1zM35 6h2v1h-2zM3 7h1v1h-1zM5 7h1v1h-1zM7 7h1v1h-1zM11 7h1v1h-1zM15 7h1v1h-1zM20 7h1v1h-1zM24 7h1v1h-1zM33 7h1v1h-1zM36 7h1v1h-1zM9 8h1v1h-1zM6 9h1v1h-1zM24 9h1v1h-1zM36 9h1v1h-1z"/><path fill="#000" fill-opacity="0.50" d="M18 1h1v1h-1zM33 1h1v1h-1zM17 2h2v1h-2zM28 2h1v1h-1zM3 3h1v1h-1zM6 3h1v1h-1zM14 3h1v1h-1zM17 3h1v1h-1zM23 3h2v1h-2zM2 4h1v1h-1zM6 4h1v1h-1zM14 4h1v1h-1zM16 4h1v1h-1zM34 4h1v1h-1zM6 5h1v1h-1zM14 5h1v1h-1zM16 5h1v1h-1zM33 5h1v1h-1zM35 5h1v1h-1zM10 6h2v1h-2zM17 6h1v1h-1zM27 6h1v1h-1zM29 6h1v1h-1zM33 6h1v1h-1zM2 7h1v1h-1zM8 7h1v1h-1zM16 7h2v1h-2zM25 7h1v1h-1zM27 7h1v1h-1zM2 8h1v1h-1zM8 8h1v1h-1zM14 8h1v1h-1zM19 8h1v1h-1zM26 8h1v1h-1zM31 8h2v1h-2zM35 8h1v1h-1zM0 9h2v1h-2zM7 9h1v1h-1zM15 9h1v1h-1zM20 9h4v1h-4zM30 9h1v1h-1z"/><path fill="#000" fill-opacity="0.75" d="M33 0h1v1h-1zM4 2h1v1h-1zM33 3h1v1h-1zM1 4h1v1h-1zM23 4h2v1h-2zM6 6h1v1h-1zM14 6h2v1h-2zM31 6h1v1h-1zM6 7h1v1h-1zM9 7h2v1h-2zM14 7h1v1h-1zM19 7h1v1h-1zM26 7h1v1h-1zM31 7h1v1h-1zM1 8h1v1h-1zM6 8h1v1h-1zM16 8h1v1h-1zM31 9h1v1h-1z"/><path fill="#000" fill-opacity="1.00" d="M28 3h1v1h-1zM33 4h1v1h-1zM15 5h1v1h-1zM36 5h1v1h-1zM3 6h1v1h-1zM16 6h1v1h-1zM28 6h1v1h-1zM32 6h1v1h-1zM32 7h1v1h-1zM7 8h1v1h-1zM15 8h1v1h-1zM20 8h6v1h-6zM36 8h1v1h-1z"/></svg><div class="a" style="left:1009px;top:96px;width:1px;height:411px;background:#f5f5f5"></div><div class="a" style="left:10px;top:96px;width:999px;height:411px;background:#fff;border-top:2px solid #6a6a6a;border-left:1px solid #6a6a6a;border-bottom:1px solid #e3e3e3"></div><div class="a" style="left:11px;top:98px;width:12px;height:408px;background:#f0f0f0"></div><div class="a" style="left:12px;top:110px;width:11px;height:13px;background:#cdcdcd"></div><svg class="a" style="left:13px;top:102px" width="8" height="6"><path d="M1 5L4 2L7 5" stroke="#606060" stroke-width="1.5" fill="none"/></svg><svg class="a" style="left:13px;top:497px" width="8" height="6"><path d="M1 1L4 4L7 1" stroke="#606060" stroke-width="1.5" fill="none"/></svg><svg class="u" style="left:811px;top:104px" width="193" height="20" ><path fill="#000" fill-opacity="0.25" d="M61 1h1v1h-1zM58 3h1v1h-1zM174 3h1v1h-1zM68 4h1v1h-1zM173 4h1v1h-1zM175 4h1v1h-1zM93 5h1v1h-1zM172 5h1v1h-1zM53 6h1v1h-1zM69 6h1v1h-1zM86 6h1v1h-1zM97 6h1v1h-1zM172 6h2v1h-2zM35 7h1v1h-1zM69 7h1v1h-1zM73 7h1v1h-1zM96 7h1v1h-1zM120 7h2v1h-2zM138 7h1v1h-1zM140 7h1v1h-1zM69 8h1v1h-1zM73 8h1v1h-1zM79 8h1v1h-1zM81 8h1v1h-1zM113 8h1v1h-1zM118 8h1v1h-1zM121 8h1v1h-1zM141 8h1v1h-1zM19 9h1v1h-1zM36 9h1v1h-1zM67 9h1v1h-1zM69 9h1v1h-1zM71 9h1v1h-1zM78 9h1v1h-1zM82 9h1v1h-1zM87 9h1v1h-1zM120 9h1v1h-1zM137 9h1v1h-1zM140 9h1v1h-1zM189 9h2v1h-2zM192 9h1v1h-1zM24 10h1v1h-1zM36 10h1v1h-1zM67 10h1v1h-1zM69 10h1v1h-1zM71 10h1v1h-1zM78 10h1v1h-1zM97 10h1v1h-1zM116 10h1v1h-1zM125 10h1v1h-1zM139 10h1v1h-1zM150 10h1v1h-1zM158 10h1v1h-1zM163 10h1v1h-1zM187 10h2v1h-2zM19 11h1v1h-1zM25 11h1v1h-1zM30 11h1v1h-1zM36 11h1v1h-1zM44 11h1v1h-1zM51 11h1v1h-1zM67 11h1v1h-1zM71 11h1v1h-1zM77 11h1v1h-1zM79 11h4v1h-4zM97 11h1v1h-1zM108 11h1v1h-1zM132 11h1v1h-1zM138 11h1v1h-1zM145 11h1v1h-1zM149 11h1v1h-1zM164 11h1v1h-1zM186 11h1v1h-1zM7 12h1v1h-1zM19 12h1v1h-1zM29 12h1v1h-1zM36 12h1v1h-1zM38 12h1v1h-1zM42 12h1v1h-1zM59 12h2v1h-2zM67 12h1v1h-1zM71 12h1v1h-1zM76 12h1v1h-1zM79 12h1v1h-1zM95 12h1v1h-1zM97 12h1v1h-1zM105 12h1v1h-1zM123 12h1v1h-1zM141 12h1v1h-1zM146 12h1v1h-1zM152 12h1v1h-1zM156 12h1v1h-1zM161 12h1v1h-1zM179 12h1v1h-1zM189 12h1v1h-1zM191 12h1v1h-1zM0 13h1v1h-1zM22 13h1v1h-1zM29 13h1v1h-1zM41 13h1v1h-1zM43 13h1v1h-1zM49 13h1v1h-1zM51 13h1v1h-1zM60 13h1v1h-1zM71 13h1v1h-1zM74 13h1v1h-1zM79 13h1v1h-1zM95 13h1v1h-1zM108 13h1v1h-1zM139 13h1v1h-1zM141 13h1v1h-1zM149 13h1v1h-1zM152 13h1v1h-1zM167 13h1v1h-1zM169 13h1v1h-1zM177 13h1v1h-1zM6 14h1v1h-1zM10 14h1v1h-1zM17 14h1v1h-1zM27 14h1v1h-1zM39 14h1v1h-1zM47 14h1v1h-1zM50 14h1v1h-1zM58 14h1v1h-1zM71 14h1v1h-1zM95 14h2v1h-2zM105 14h1v1h-1zM116 14h1v1h-1zM124 14h1v1h-1zM128 14h1v1h-1zM131 14h1v1h-1zM134 14h1v1h-1zM149 14h1v1h-1zM159 14h1v1h-1zM162 14h1v1h-1zM164 14h2v1h-2zM172 14h1v1h-1zM187 14h1v1h-1zM10 15h1v1h-1zM18 15h1v1h-1zM24 15h1v1h-1zM28 15h2v1h-2zM35 15h1v1h-1zM37 15h2v1h-2zM41 15h1v1h-1zM49 15h1v1h-1zM66 15h1v1h-1zM72 15h1v1h-1zM116 15h1v1h-1zM122 15h1v1h-1zM130 15h2v1h-2zM136 15h1v1h-1zM140 15h1v1h-1zM147 15h1v1h-1zM155 15h1v1h-1zM158 15h1v1h-1zM160 15h1v1h-1zM163 15h2v1h-2zM167 15h1v1h-1zM8 16h1v1h-1zM11 16h1v1h-1zM14 16h2v1h-2zM21 16h1v1h-1zM61 16h1v1h-1zM64 16h1v1h-1zM67 16h1v1h-1zM122 16h2v1h-2zM131 16h1v1h-1zM137 16h1v1h-1zM147 16h2v1h-2zM155 16h1v1h-1zM160 16h2v1h-2zM180 16h1v1h-1zM183 16h1v1h-1zM187 16h1v1h-1zM189 16h1v1h-1zM191 16h1v1h-1zM58 17h1v1h-1zM132 17h1v1h-1zM177 17h1v1h-1zM185 17h1v1h-1zM15 18h1v1h-1zM59 18h1v1h-1zM65 18h1v1h-1zM133 18h2v1h-2zM178 18h1v1h-1zM188 18h1v1h-1zM190 18h1v1h-1zM36 19h1v1h-1z"/><path fill="#000" fill-opacity="0.50" d="M60 0h2v1h-2zM57 2h1v1h-1zM59 2h1v1h-1zM56 4h1v1h-1zM69 4h1v1h-1zM55 5h1v1h-1zM69 5h1v1h-1zM82 5h1v1h-1zM86 5h1v1h-1zM174 5h1v1h-1zM84 6h1v1h-1zM91 6h1v1h-1zM93 6h1v1h-1zM139 6h1v1h-1zM36 7h1v1h-1zM53 7h1v1h-1zM72 7h1v1h-1zM36 8h1v1h-1zM53 8h1v1h-1zM80 8h1v1h-1zM84 8h3v1h-3zM88 8h3v1h-3zM97 8h1v1h-1zM138 8h1v1h-1zM172 8h1v1h-1zM53 9h1v1h-1zM83 9h1v1h-1zM97 9h1v1h-1zM112 9h1v1h-1zM115 9h1v1h-1zM139 9h1v1h-1zM19 10h1v1h-1zM27 10h1v1h-1zM54 10h1v1h-1zM83 10h1v1h-1zM117 10h1v1h-1zM134 10h1v1h-1zM191 10h1v1h-1zM26 11h1v1h-1zM28 11h1v1h-1zM43 11h1v1h-1zM109 11h1v1h-1zM124 11h1v1h-1zM146 11h1v1h-1zM157 11h1v1h-1zM159 11h1v1h-1zM169 11h1v1h-1zM173 11h1v1h-1zM192 11h1v1h-1zM10 12h1v1h-1zM22 12h1v1h-1zM26 12h1v1h-1zM28 12h1v1h-1zM50 12h1v1h-1zM52 12h1v1h-1zM111 12h1v1h-1zM131 12h1v1h-1zM133 12h1v1h-1zM138 12h1v1h-1zM168 12h1v1h-1zM173 12h1v1h-1zM178 12h1v1h-1zM186 12h1v1h-1zM190 12h1v1h-1zM1 13h1v1h-1zM7 13h1v1h-1zM9 13h2v1h-2zM23 13h1v1h-1zM25 13h1v1h-1zM37 13h1v1h-1zM67 13h1v1h-1zM73 13h1v1h-1zM75 13h1v1h-1zM124 13h1v1h-1zM130 13h1v1h-1zM157 13h1v1h-1zM186 13h2v1h-2zM3 14h3v1h-3zM23 14h1v1h-1zM38 14h1v1h-1zM42 14h1v1h-1zM48 14h1v1h-1zM68 14h1v1h-1zM112 14h1v1h-1zM126 14h1v1h-1zM139 14h1v1h-1zM142 14h1v1h-1zM151 14h1v1h-1zM157 14h1v1h-1zM168 14h1v1h-1zM177 14h2v1h-2zM21 15h1v1h-1zM36 15h1v1h-1zM46 15h1v1h-1zM58 15h1v1h-1zM73 15h2v1h-2zM125 15h1v1h-1zM127 15h1v1h-1zM129 15h1v1h-1zM137 15h1v1h-1zM141 15h1v1h-1zM143 15h1v1h-1zM148 15h1v1h-1zM150 15h1v1h-1zM166 15h1v1h-1zM185 15h1v1h-1zM37 16h1v1h-1zM58 16h1v1h-1zM60 16h1v1h-1zM65 16h1v1h-1zM135 16h1v1h-1zM179 16h1v1h-1zM188 16h1v1h-1zM36 17h2v1h-2zM66 17h1v1h-1zM100 17h1v1h-1zM191 17h1v1h-1zM10 18h1v1h-1zM38 18h1v1h-1zM64 18h1v1h-1zM100 18h1v1h-1zM183 18h1v1h-1zM37 19h1v1h-1zM99 19h1v1h-1z"/><path fill="#000" fill-opacity="0.75" d="M59 1h2v1h-2zM56 3h2v1h-2zM55 4h1v1h-1zM54 5h1v1h-1zM68 5h1v1h-1zM83 5h2v1h-2zM173 5h1v1h-1zM82 6h1v1h-1zM85 6h1v1h-1zM92 6h1v1h-1zM88 7h3v1h-3zM92 7h1v1h-1zM97 7h1v1h-1zM139 7h1v1h-1zM173 7h1v1h-1zM35 8h1v1h-1zM54 8h1v1h-1zM72 8h1v1h-1zM87 8h1v1h-1zM96 8h1v1h-1zM119 8h2v1h-2zM173 8h1v1h-1zM35 9h1v1h-1zM54 9h1v1h-1zM72 9h1v1h-1zM84 9h1v1h-1zM86 9h1v1h-1zM113 9h1v1h-1zM118 9h2v1h-2zM138 9h1v1h-1zM172 9h2v1h-2zM18 10h1v1h-1zM30 10h1v1h-1zM53 10h1v1h-1zM79 10h1v1h-1zM82 10h1v1h-1zM112 10h1v1h-1zM115 10h1v1h-1zM172 10h2v1h-2zM189 10h2v1h-2zM23 11h1v1h-1zM27 11h1v1h-1zM29 11h1v1h-1zM52 11h2v1h-2zM78 11h1v1h-1zM110 11h1v1h-1zM112 11h3v1h-3zM126 11h1v1h-1zM133 11h2v1h-2zM140 11h1v1h-1zM162 11h1v1h-1zM172 11h1v1h-1zM188 11h1v1h-1zM43 12h1v1h-1zM106 12h2v1h-2zM109 12h2v1h-2zM145 12h1v1h-1zM159 12h1v1h-1zM164 12h1v1h-1zM169 12h1v1h-1zM172 12h1v1h-1zM187 12h1v1h-1zM2 13h2v1h-2zM28 13h1v1h-1zM36 13h1v1h-1zM50 13h1v1h-1zM59 13h1v1h-1zM68 13h1v1h-1zM76 13h3v1h-3zM96 13h1v1h-1zM104 13h1v1h-1zM107 13h1v1h-1zM125 13h2v1h-2zM131 13h1v1h-1zM144 13h2v1h-2zM150 13h1v1h-1zM158 13h2v1h-2zM163 13h2v1h-2zM172 13h1v1h-1zM178 13h1v1h-1zM0 14h3v1h-3zM9 14h1v1h-1zM18 14h1v1h-1zM24 14h1v1h-1zM35 14h1v1h-1zM40 14h1v1h-1zM59 14h1v1h-1zM67 14h1v1h-1zM75 14h1v1h-1zM103 14h2v1h-2zM113 14h2v1h-2zM129 14h1v1h-1zM140 14h1v1h-1zM150 14h1v1h-1zM163 14h1v1h-1zM166 14h1v1h-1zM186 14h1v1h-1zM17 15h1v1h-1zM22 15h2v1h-2zM39 15h2v1h-2zM47 15h2v1h-2zM67 15h1v1h-1zM102 15h2v1h-2zM112 15h1v1h-1zM114 15h2v1h-2zM123 15h2v1h-2zM128 15h1v1h-1zM133 15h1v1h-1zM138 15h2v1h-2zM142 15h1v1h-1zM149 15h1v1h-1zM156 15h2v1h-2zM161 15h2v1h-2zM165 15h1v1h-1zM177 15h2v1h-2zM186 15h1v1h-1zM10 16h1v1h-1zM17 16h1v1h-1zM101 16h2v1h-2zM132 16h1v1h-1zM134 16h1v1h-1zM177 16h1v1h-1zM184 16h1v1h-1zM190 16h1v1h-1zM9 17h1v1h-1zM16 17h1v1h-1zM101 17h1v1h-1zM134 17h1v1h-1zM187 17h1v1h-1zM11 18h1v1h-1zM13 18h2v1h-2zM36 18h1v1h-1zM60 18h1v1h-1zM63 18h1v1h-1zM99 18h1v1h-1zM179 18h1v1h-1zM182 18h1v1h-1zM98 19h1v1h-1z"/><path fill="#000" fill-opacity="1.00" d="M58 2h1v1h-1zM174 4h1v1h-1zM85 5h1v1h-1zM54 6h1v1h-1zM68 6h1v1h-1zM83 6h1v1h-1zM54 7h1v1h-1zM68 7h1v1h-1zM91 7h1v1h-1zM68 8h1v1h-1zM139 8h2v1h-2zM68 9h1v1h-1zM79 9h3v1h-3zM85 9h1v1h-1zM96 9h1v1h-1zM116 9h2v1h-2zM28 10h2v1h-2zM35 10h1v1h-1zM68 10h1v1h-1zM72 10h1v1h-1zM80 10h2v1h-2zM96 10h1v1h-1zM113 10h2v1h-2zM192 10h1v1h-1zM18 11h1v1h-1zM24 11h1v1h-1zM35 11h1v1h-1zM68 11h1v1h-1zM72 11h1v1h-1zM96 11h1v1h-1zM111 11h1v1h-1zM125 11h1v1h-1zM139 11h1v1h-1zM150 11h2v1h-2zM158 11h1v1h-1zM163 11h1v1h-1zM187 11h1v1h-1zM189 11h3v1h-3zM18 12h1v1h-1zM23 12h3v1h-3zM35 12h1v1h-1zM51 12h1v1h-1zM68 12h1v1h-1zM72 12h1v1h-1zM77 12h2v1h-2zM96 12h1v1h-1zM108 12h1v1h-1zM124 12h3v1h-3zM132 12h1v1h-1zM139 12h2v1h-2zM149 12h3v1h-3zM157 12h2v1h-2zM162 12h2v1h-2zM4 13h3v1h-3zM18 13h1v1h-1zM24 13h1v1h-1zM35 13h1v1h-1zM38 13h1v1h-1zM42 13h1v1h-1zM72 13h1v1h-1zM105 13h2v1h-2zM140 13h1v1h-1zM151 13h1v1h-1zM168 13h1v1h-1zM28 14h2v1h-2zM36 14h2v1h-2zM41 14h1v1h-1zM49 14h1v1h-1zM72 14h3v1h-3zM115 14h1v1h-1zM125 14h1v1h-1zM130 14h1v1h-1zM143 14h2v1h-2zM158 14h1v1h-1zM167 14h1v1h-1zM9 15h1v1h-1zM59 15h1v1h-1zM113 15h1v1h-1zM132 15h1v1h-1zM134 15h2v1h-2zM9 16h1v1h-1zM16 16h1v1h-1zM59 16h1v1h-1zM66 16h1v1h-1zM133 16h1v1h-1zM178 16h1v1h-1zM185 16h1v1h-1zM10 17h6v1h-6zM59 17h7v1h-7zM133 17h1v1h-1zM178 17h7v1h-7zM188 17h3v1h-3zM12 18h1v1h-1zM37 18h1v1h-1zM61 18h2v1h-2zM180 18h2v1h-2z"/></svg><svg class="a" style="left:812px;top:123px" width="29" height="3"><path d="M0 1L1 2L3 0L5 2L7 0L9 2L11 0L13 2L15 0L17 2L19 0L21 2L23 0L25 2L27 0" stroke="#e85858" stroke-width="1" fill="none"/></svg><svg class="a" style="left:860px;top:148px" width="96" height="76"><defs><linearGradient id="lg" gradientUnits="userSpaceOnUse" x1="4" y1="45" x2="88" y2="40"><stop offset="0" stop-color="#f00a20"/><stop offset="0.3" stop-color="#9a10b0"/><stop offset="0.5" stop-color="#2a12f4"/><stop offset="0.7" stop-color="#1a60d0"/><stop offset="0.85" stop-color="#14a090"/><stop offset="1" stop-color="#10d030"/></linearGradient></defs><path d="M4 58C6 46 20 34 35 35C42 38 41 53 32 59C22 66 10 65 4 58z" fill="#fff" stroke="url(#lg)" stroke-width="3.2" stroke-linejoin="round"/><ellipse cx="24" cy="50" rx="10.5" ry="4.3" transform="rotate(-35 24 50)" fill="url(#lg)"/><path d="M21 28l4.5 4.5-4.5 4.5-4.5-4.5z" fill="#fff" stroke="url(#lg)" stroke-width="3" stroke-linejoin="round"/><path d="M86 6L70 16Q66 19 66 25L65 38Q61 42 56 44L44 47" fill="none" stroke="url(#lg)" stroke-width="8" stroke-linecap="round" stroke-linejoin="round"/><path d="M77 22L76 47" fill="none" stroke="url(#lg)" stroke-width="8" stroke-linecap="round" stroke-linejoin="round"/><path d="M76 47Q82 48 84 39" fill="none" stroke="url(#lg)" stroke-width="8" stroke-linecap="round" stroke-linejoin="round"/><path d="M44 21L42 46Q40 51 34 50" fill="none" stroke="url(#lg)" stroke-width="8" stroke-linecap="round" stroke-linejoin="round"/><path d="M37 27L34 50" fill="none" stroke="url(#lg)" stroke-width="8" stroke-linecap="round" stroke-linejoin="round"/><path d="M86 6L70 16Q66 19 66 25L65 38Q61 42 56 44L44 47" fill="none" stroke="#fff" stroke-width="2.2" stroke-linecap="round" stroke-linejoin="round"/><path d="M77 22L76 47" fill="none" stroke="#fff" stroke-width="2.2" stroke-linecap="round" stroke-linejoin="round"/><path d="M76 47Q82 48 84 39" fill="none" stroke="#fff" stroke-width="2.2" stroke-linecap="round" stroke-linejoin="round"/><path d="M44 21L42 46Q40 51 34 50" fill="none" stroke="#fff" stroke-width="2.2" stroke-linecap="round" stroke-linejoin="round"/><path d="M37 27L34 50" fill="none" stroke="#fff" stroke-width="2.2" stroke-linecap="round" stroke-linejoin="round"/><path d="M45 31L50 29L55 32L57 37L52 41L46 40z" fill="url(#lg)" stroke="url(#lg)" stroke-width="3" stroke-linejoin="round"/><path d="M48 32l2 2-2 2-2-2zM53 33l2 2-2 2-2-2z" fill="#fff"/><path d="M77 54l4 4-4 4-4-4z" fill="#fff" stroke="url(#lg)" stroke-width="2.6" stroke-linejoin="round"/><path d="M84 53l4 4-4 4-4-4z" fill="#fff" stroke="url(#lg)" stroke-width="2.6" stroke-linejoin="round"/><path d="M80 60l4 4-4 4-4-4z" fill="#fff" stroke="url(#lg)" stroke-width="2.6" stroke-linejoin="round"/></svg><div class="a" style="left:0;top:507px;width:1020px;height:10px;background:#f0f0f0"></div><div class="a" style="left:0;top:507px;width:1020px;height:1px;background:#fafafa"></div><div class="a" style="left:0;top:517px;width:1020px;height:1px;background:#e2e2e2"></div><div class="a" style="left:0;top:543px;width:1020px;height:1px;background:#f8f8f8"></div><div class="t" style="left:4px;top:520px;font-size:9.8px;color:#111;transform:scaleX(.855)">Characters: 45, Lines: 3</div><div class="a" style="left:723px;top:523px;width:30px;height:18px;border:1px solid #acacac;background:#efefef"></div><div class="a" style="left:737px;top:532px;width:3px;height:1px;background:#222"></div><div class="a" style="left:759px;top:529px;width:102px;height:4px;background:#e2e2e2;border:1px solid #d6d6d6"></div><svg class="a" style="left:776px;top:525px" width="10" height="13" viewBox="0 0 10 13"><path d="M0.5 0.5h8v8l-4 3.5-4-3.5z" fill="#f3f3f3" stroke="#8c8c8c" stroke-width="1"/></svg><div class="a" style="left:865px;top:523px;width:30px;height:18px;border:1px solid #acacac;background:#efefef"></div><div class="a" style="left:878px;top:532px;width:5px;height:1px;background:#111"></div><div class="a" style="left:880px;top:530px;width:1px;height:5px;background:#111"></div><div class="a" style="left:897px;top:525px;width:91px;height:16px;border:1px solid #b4b4b4;background:#fff"></div><div class="t" style="left:900px;top:527px;font-size:10px;color:#111;transform:scaleX(.88)">100%</div><svg class="a" style="left:976px;top:531px" width="7" height="5" viewBox="0 0 7 5"><path d="M0.5 1l3 3 3-3" stroke="#444" stroke-width="1.1" fill="none"/></svg><div class="a" style="left:0;top:544px;width:1020px;height:28px;background:#83806f"></div><div class="a" style="left:202px;top:544px;width:98px;height:28px;background:#867b66"></div><svg class="a" style="left:0;top:544px" width="1020" height="28"><path d="M416 0H502L499 28H416z" fill="#7d6d64"/><path d="M502 0H562L567 28H499z" fill="#6a7374"/><path d="M562 0H880L945 28H567z" fill="#8597ad"/><path d="M880 0H1020V28H945z" fill="#878767"/></svg><div class="a" style="left:85px;top:544px;width:118px;height:28px;background:#a09987;border-left:1px solid #aea795;border-right:1px solid #b0a997"></div><div class="a" style="left:299px;top:544px;width:118px;height:28px;background:#b6b1a6;border-left:1px solid #c8c3b8;border-right:1px solid #e6e4dc;border-top:2px solid #c2beb5"></div><div class="a" style="left:417px;top:544px;width:1px;height:28px;background:#6a5e56"></div><svg class="a" style="left:8px;top:548px" width="22" height="21" viewBox="0 0 22 21"><path d="M1 2.7L9 1.9V9.7H1z M10 1.8L20.5 0.9V9.7H10z M1 10.7H9V18.4L1 17.6z M10 10.7H20.5V19.6L10 18.6z" fill="#f6f6f4"/></svg><svg class="a" style="left:44px;top:544px" width="30" height="28" viewBox="0 0 30 28"><circle cx="17.6" cy="14.7" r="9.6" fill="#3fb2ee"/><circle cx="17.6" cy="14.7" r="6" fill="#5cc8f6"/><path d="M12.3 12.9Q17.8 7.6 23.2 12.9z" fill="#83806f"/><path d="M13.5 16.5H28V19.6H20Q15 19.6 13.5 16.5z" fill="#83806f"/><path d="M6.5 23.5C4 18 14 5 22 3.5C26 3 27.5 5 26.5 9" stroke="#f2c020" stroke-width="2" fill="none"/></svg><svg class="a" style="left:93px;top:547px" width="22" height="22" viewBox="0 0 22 22"><circle cx="11" cy="11" r="10.3" fill="#e83a30"/><path d="M11 11L1.2 8.5A10.3 10.3 0 0 0 9 21.1z" fill="#3aa84a"/><path d="M11 11L21.1 9A10.3 10.3 0 0 1 9 21.1z" fill="#f4c020"/><circle cx="11" cy="11" r="4.8" fill="#f4f4f4"/><circle cx="11" cy="11" r="3.6" fill="#3a7ad8"/></svg><div class="t" style="left:118px;top:551px;font-size:11px;color:#f4f2ee;transform:scaleX(.81)">Softonic Develop...</div><svg class="a" style="left:216px;top:549px" width="24" height="22" viewBox="0 0 24 22"><path d="M0.5 2h8l2 2h12v15H0.5z" fill="#f0cf78" stroke="#d9b050" stroke-width="0.8"/><rect x="2" y="4.5" width="20" height="12" fill="#fbeab8"/><circle cx="4" cy="3" r="1" fill="#3ab040"/><circle cx="10" cy="4" r="1" fill="#e03030"/><circle cx="17" cy="5" r="1" fill="#3080e0"/><path d="M3 14h18v7h-5v-3.5h-8v3.5H3z" fill="#62a0e0"/></svg><svg class="a" style="left:263px;top:547px" width="22" height="23" viewBox="0 0 22 23"><path d="M6 1a6 6 0 0 0-5 9 10 10 0 0 0 11 12 6 6 0 0 0 9-5A10 10 0 0 0 10 1.5 6 6 0 0 0 6 1z" fill="#18a0e2"/><text x="5.5" y="17" font-family="Liberation Sans" font-weight="bold" font-size="15" fill="#fff">S</text></svg><svg class="a" style="left:306px;top:547px" width="24" height="24" viewBox="0 0 24 24"><path d="M1 2.5h7.5v18H1z" fill="#f4f8e8"/><path d="M1.5 4.5h6.5M1.5 6.5h6.5M1.5 8.5h6.5M1.5 10.5h6.5M1.5 12.5h6.5M1.5 14.5h6.5M1.5 16.5h6.5M1.5 18.5h6.5" stroke="#c8d8a0" stroke-width="0.7"/><path d="M8.2 0L23 2V21L8.2 23z" fill="#86c65a"/></svg><svg class="u" style="left:316px;top:553px" width="12" height="11" ><path fill="#f4faee" fill-opacity="0.25" d="M10 1h1v1h-1zM10 2h1v1h-1zM2 4h1v1h-1zM4 4h2v1h-2zM3 6h1v1h-1zM6 6h1v1h-1zM9 6h1v1h-1zM3 7h2v1h-2zM6 7h2v1h-2zM1 8h1v1h-1zM6 8h1v1h-1zM11 8h1v1h-1zM0 9h1v1h-1zM3 9h1v1h-1zM8 9h1v1h-1zM5 10h1v1h-1zM7 10h1v1h-1z"/><path fill="#f4faee" fill-opacity="0.50" d="M10 3h1v1h-1zM10 4h1v1h-1zM1 5h1v1h-1zM4 5h1v1h-1zM8 5h3v1h-3zM10 6h1v1h-1zM10 7h2v1h-2zM10 8h1v1h-1zM2 9h1v1h-1zM1 10h1v1h-1zM4 10h1v1h-1zM6 10h1v1h-1z"/><path fill="#f4faee" fill-opacity="0.75" d="M11 0h1v1h-1zM11 1h1v1h-1zM11 3h1v1h-1zM11 4h1v1h-1zM11 5h1v1h-1zM4 6h1v1h-1zM8 6h1v1h-1zM11 6h1v1h-1zM1 7h1v1h-1zM5 8h1v1h-1zM8 8h1v1h-1zM5 9h2v1h-2zM3 10h1v1h-1z"/><path fill="#f4faee" fill-opacity="1.00" d="M11 2h1v1h-1zM2 5h1v1h-1zM5 5h1v1h-1zM1 6h2v1h-2zM5 6h1v1h-1zM2 7h1v1h-1zM5 7h1v1h-1zM8 7h1v1h-1zM2 8h1v1h-1zM7 8h1v1h-1zM1 9h1v1h-1zM4 9h1v1h-1zM7 9h1v1h-1zM0 10h1v1h-1z"/></svg><svg class="u" style="left:333px;top:550px" width="61" height="12" ><path fill="#f6f4f0" fill-opacity="0.25" d="M59 1h2v1h-2zM59 2h2v1h-2zM34 3h1v1h-1zM36 3h1v1h-1zM59 3h1v1h-1zM34 4h1v1h-1zM59 4h1v1h-1zM22 5h1v1h-1zM30 5h1v1h-1zM35 5h1v1h-1zM43 5h1v1h-1zM49 5h1v1h-1zM53 5h2v1h-2zM59 5h1v1h-1zM9 6h1v1h-1zM19 6h1v1h-1zM23 6h1v1h-1zM29 6h1v1h-1zM44 6h1v1h-1zM48 6h1v1h-1zM53 6h1v1h-1zM58 6h1v1h-1zM3 7h1v1h-1zM5 7h1v1h-1zM8 7h1v1h-1zM16 7h2v1h-2zM19 7h1v1h-1zM21 7h1v1h-1zM27 7h1v1h-1zM40 7h1v1h-1zM42 7h1v1h-1zM51 7h1v1h-1zM55 7h1v1h-1zM2 8h1v1h-1zM19 8h1v1h-1zM26 8h1v1h-1zM33 8h1v1h-1zM39 8h2v1h-2zM51 8h1v1h-1zM55 8h1v1h-1zM2 9h1v1h-1zM5 9h1v1h-1zM7 9h3v1h-3zM11 9h2v1h-2zM14 9h1v1h-1zM16 9h2v1h-2zM21 9h1v1h-1zM26 9h1v1h-1zM29 9h1v1h-1zM39 9h2v1h-2zM42 9h1v1h-1zM49 9h1v1h-1zM51 9h2v1h-2zM54 9h1v1h-1zM60 9h1v1h-1zM0 10h1v1h-1zM13 10h1v1h-1zM20 10h2v1h-2zM23 10h2v1h-2zM28 10h1v1h-1zM37 10h1v1h-1zM41 10h2v1h-2zM44 10h1v1h-1zM47 10h2v1h-2zM55 10h1v1h-1zM58 10h1v1h-1zM2 11h1v1h-1zM11 11h2v1h-2zM20 11h1v1h-1zM22 11h1v1h-1zM26 11h1v1h-1zM39 11h1v1h-1zM41 11h1v1h-1zM43 11h1v1h-1zM55 11h1v1h-1zM57 11h1v1h-1z"/><path fill="#f6f4f0" fill-opacity="0.50" d="M60 0h1v1h-1zM35 4h1v1h-1zM60 4h1v1h-1zM60 5h1v1h-1zM18 6h1v1h-1zM21 6h1v1h-1zM30 6h1v1h-1zM36 6h1v1h-1zM42 6h1v1h-1zM50 6h1v1h-1zM57 6h1v1h-1zM60 6h1v1h-1zM7 7h1v1h-1zM9 7h1v1h-1zM12 7h1v1h-1zM18 7h1v1h-1zM23 7h1v1h-1zM30 7h1v1h-1zM44 7h1v1h-1zM48 7h1v1h-1zM50 7h1v1h-1zM54 7h1v1h-1zM57 7h2v1h-2zM60 7h1v1h-1zM4 8h1v1h-1zM6 8h1v1h-1zM10 8h2v1h-2zM13 8h1v1h-1zM15 8h1v1h-1zM22 8h2v1h-2zM28 8h3v1h-3zM34 8h3v1h-3zM43 8h2v1h-2zM48 8h3v1h-3zM52 8h3v1h-3zM58 8h1v1h-1zM60 8h1v1h-1zM3 9h2v1h-2zM6 9h1v1h-1zM10 9h1v1h-1zM13 9h1v1h-1zM15 9h1v1h-1zM18 9h1v1h-1zM22 9h2v1h-2zM27 9h2v1h-2zM34 9h2v1h-2zM43 9h2v1h-2zM50 9h1v1h-1zM53 9h1v1h-1zM58 9h1v1h-1zM1 10h1v1h-1zM11 10h2v1h-2zM22 10h1v1h-1zM25 10h1v1h-1zM29 10h2v1h-2zM38 10h1v1h-1zM43 10h1v1h-1zM49 10h2v1h-2zM56 10h1v1h-1zM0 11h2v1h-2zM24 11h2v1h-2zM29 11h1v1h-1zM37 11h2v1h-2zM48 11h2v1h-2zM56 11h1v1h-1z"/><path fill="#f6f4f0" fill-opacity="0.75" d="M35 3h1v1h-1zM60 3h1v1h-1zM2 6h1v1h-1zM22 6h1v1h-1zM26 6h1v1h-1zM35 6h1v1h-1zM39 6h1v1h-1zM43 6h1v1h-1zM49 6h1v1h-1zM54 6h1v1h-1zM2 7h1v1h-1zM26 7h1v1h-1zM36 7h1v1h-1zM39 7h1v1h-1zM3 8h1v1h-1zM5 8h1v1h-1zM7 8h3v1h-3zM12 8h1v1h-1zM14 8h1v1h-1zM16 8h3v1h-3zM21 8h1v1h-1zM27 8h1v1h-1zM42 8h1v1h-1zM2 10h1v1h-1zM26 10h1v1h-1zM39 10h1v1h-1zM57 10h1v1h-1zM21 11h1v1h-1zM42 11h1v1h-1z"/></svg><div class="a" style="left:864px;top:526px;width:75px;height:43px;border-radius:10px;background:rgba(30,30,30,.22);border:3px solid rgba(238,240,244,.5)"></div><div class="t" style="left:821px;top:553px;font-size:10.5px;color:#fff;transform:scaleX(.85)">Software</div><div class="t" style="left:861px;top:547px;font-size:9px;color:#fff">»</div><svg class="a" style="left:875px;top:553px" width="8" height="5" viewBox="0 0 8 5"><path d="M0.5 4.5L4 1l3.5 3.5z" fill="#e8e8e8"/></svg><svg class="a" style="left:893px;top:552px" width="11" height="12" viewBox="0 0 11 12"><path d="M1 0.5v11M1 1h4.5l-0.5 3h-4" stroke="#fff" stroke-width="1.2" fill="#fff"/><circle cx="7" cy="8" r="3.2" fill="none" stroke="#f0f0f0" stroke-width="1.3"/><path d="M6 6.5l2 3M8 6.5l-2 3" stroke="#f0f0f0" stroke-width="1"/></svg><svg class="a" style="left:908px;top:551px" width="13" height="13" viewBox="0 0 13 13"><path d="M1.5 0.5v12M3.5 0.5v4" stroke="#fff" stroke-width="1.2"/><rect x="6" y="3" width="6" height="9.5" fill="none" stroke="#fff" stroke-width="1.1"/><rect x="8" y="1.5" width="2" height="1.5" fill="#fff"/></svg><svg class="a" style="left:926px;top:553px" width="14" height="10" viewBox="0 0 14 10"><path d="M1 9.5h1.5v-1.5H1zM4 9.5h1.5v-3H4zM7 9.5h1.5v-4.5H7zM10 9.5h1.5v-6H10zM12.5 9.5h1.3V1.5h-1.3z" fill="#f0f0f0"/></svg><svg class="a" style="left:944px;top:552px" width="12" height="12" viewBox="0 0 12 12"><path d="M0.5 4h3l4-3.5v11l-4-3.5h-3z" fill="#f4f4f4"/><path d="M9 3.5a4 4 0 0 1 0 5M10.5 2a6 6 0 0 1 0 8" stroke="#f4f4f4" stroke-width="1" fill="none"/></svg><div class="t" style="left:969px;top:548px;font-size:10.2px;color:#fff;transform:scaleX(.92)">8:43 AM</div><div class="t" style="left:968px;top:560px;font-size:10.2px;color:#fff;transform:scaleX(.88)">3/13/2014</div><svg class="a" style="left:0;top:0" width="1020" height="572"><text x="768" y="558" font-family="Liberation Sans" font-size="30.5" fill="none" stroke="rgba(238,242,248,.5)" stroke-width="4.5" stroke-linejoin="round">S</text><text x="768" y="558" font-family="Liberation Sans" font-size="30.5" fill="rgba(40,40,45,.40)">S</text><text x="789" y="558" font-family="Liberation Sans" font-size="30.5" fill="none" stroke="rgba(238,242,248,.5)" stroke-width="4.5" stroke-linejoin="round">O</text><text x="789" y="558" font-family="Liberation Sans" font-size="30.5" fill="rgba(40,40,45,.40)">O</text><text x="814" y="558" font-family="Liberation Sans" font-size="30.5" fill="none" stroke="rgba(238,242,248,.5)" stroke-width="4.5" stroke-linejoin="round">F</text><text x="814" y="558" font-family="Liberation Sans" font-size="30.5" fill="rgba(40,40,45,.40)">F</text><text x="832" y="558" font-family="Liberation Sans" font-size="30.5" fill="none" stroke="rgba(238,242,248,.5)" stroke-width="4.5" stroke-linejoin="round">T</text><text x="832" y="558" font-family="Liberation Sans" font-size="30.5" fill="rgba(40,40,45,.40)">T</text><text x="850" y="558" font-family="Liberation Sans" font-size="30.5" fill="none" stroke="rgba(238,242,248,.5)" stroke-width="4.5" stroke-linejoin="round">-</text><text x="850" y="558" font-family="Liberation Sans" font-size="30.5" fill="rgba(40,40,45,.40)">-</text><text x="876" y="558" font-family="Liberation Sans" font-size="30.5" fill="none" stroke="rgba(238,242,248,.5)" stroke-width="4.5" stroke-linejoin="round">O</text><text x="876" y="558" font-family="Liberation Sans" font-size="30.5" fill="rgba(222,225,230,.75)">O</text><text x="899" y="558" font-family="Liberation Sans" font-size="30.5" fill="none" stroke="rgba(238,242,248,.5)" stroke-width="4.5" stroke-linejoin="round">K</text><text x="899" y="558" font-family="Liberation Sans" font-size="30.5" fill="rgba(222,225,230,.75)">K</text><text x="940" y="558" font-family="Liberation Sans" font-size="30.5" fill="none" stroke="rgba(238,242,248,.5)" stroke-width="4.5" stroke-linejoin="round">.</text><text x="940" y="558" font-family="Liberation Sans" font-size="30.5" fill="rgba(40,40,45,.40)">.</text><text x="951" y="558" font-family="Liberation Sans" font-size="30.5" fill="none" stroke="rgba(238,242,248,.5)" stroke-width="4.5" stroke-linejoin="round">N</text><text x="951" y="558" font-family="Liberation Sans" font-size="30.5" fill="rgba(40,40,45,.40)">N</text><text x="974" y="558" font-family="Liberation Sans" font-size="30.5" fill="none" stroke="rgba(238,242,248,.5)" stroke-width="4.5" stroke-linejoin="round">E</text><text x="974" y="558" font-family="Liberation Sans" font-size="30.5" fill="rgba(40,40,45,.40)">E</text><text x="992" y="558" font-family="Liberation Sans" font-size="30.5" fill="none" stroke="rgba(238,242,248,.5)" stroke-width="4.5" stroke-linejoin="round">T</text><text x="992" y="558" font-family="Liberation Sans" font-size="30.5" fill="rgba(40,40,45,.40)">T</text></svg></body></html>
